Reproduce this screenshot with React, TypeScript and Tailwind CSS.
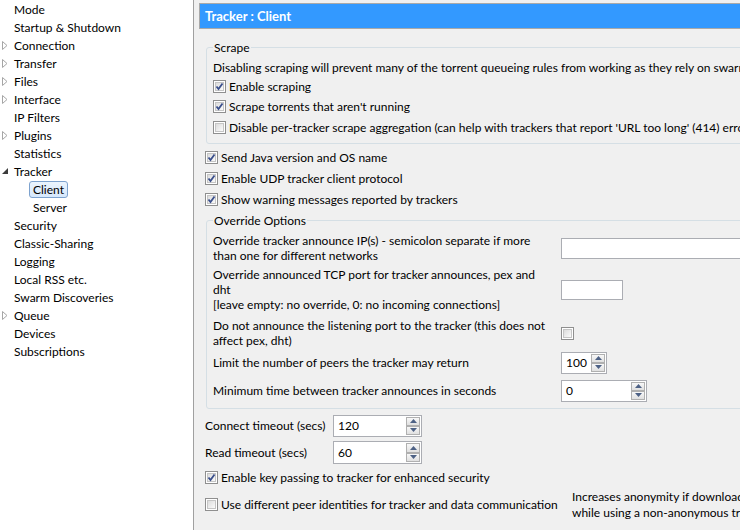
import React from "react";

const FONT = { fontFamily: "Lato, 'Open Sans', sans-serif" };

function Check({ checked }: { checked: boolean }) {
  return (
    <span className="relative inline-flex h-[13px] w-[13px] shrink-0 items-center justify-center border border-[#8f8f8f] bg-white">
      <span className="absolute inset-[1px] border border-[#c5c5c5] bg-gradient-to-br from-[#dcdcdc] to-[#fbfbfb]" />
      {checked && (
        <svg width="9" height="9" viewBox="0 0 9 9" className="relative">
          <path d="M1.5 4.5 L3.5 7 L7.5 1.5" fill="none" stroke="#3a4f8c" strokeWidth="1.8" />
        </svg>
      )}
    </span>
  );
}

function CheckRow({ checked, label, h = "h-[21px]" }: { checked: boolean; label: string; h?: string }) {
  return (
    <div className={`flex items-center gap-[3px] ${h}`}>
      <Check checked={checked} />
      <span className="whitespace-nowrap">{label}</span>
    </div>
  );
}

function Arrow({ up }: { up: boolean }) {
  return (
    <svg width="7" height="4" viewBox="0 0 7 4">
      {up ? <path d="M0 4 L3.5 0 L7 4 Z" fill="#4d6185" /> : <path d="M0 0 L3.5 4 L7 0 Z" fill="#4d6185" />}
    </svg>
  );
}

function Spinner({ value, w, h = "h-[22px]" }: { value: string; w: string; h?: string }) {
  return (
    <div className={`flex ${w} ${h} shrink-0 border border-[#abadb3] bg-white`}>
      <div className="flex flex-1 items-center pl-[4px]">{value}</div>
      <div className="flex w-[15px] flex-col gap-0 py-[1px] pr-[1px]">
        <div className="flex flex-1 items-center justify-center border border-[#b0b0b0] bg-gradient-to-b from-[#f8f8f8] to-[#e0e0e0]">
          <Arrow up />
        </div>
        <div className="flex flex-1 items-center justify-center border border-[#b0b0b0] bg-gradient-to-b from-[#f8f8f8] to-[#e0e0e0]">
          <Arrow up={false} />
        </div>
      </div>
    </div>
  );
}

type TreeItem = { label: string; level: number; exp?: "closed" | "open"; selected?: boolean };

const tree: TreeItem[] = [
  { label: "Mode", level: 0 },
  { label: "Startup & Shutdown", level: 0 },
  { label: "Connection", level: 0, exp: "closed" },
  { label: "Transfer", level: 0, exp: "closed" },
  { label: "Files", level: 0, exp: "closed" },
  { label: "Interface", level: 0, exp: "closed" },
  { label: "IP Filters", level: 0 },
  { label: "Plugins", level: 0, exp: "closed" },
  { label: "Statistics", level: 0 },
  { label: "Tracker", level: 0, exp: "open" },
  { label: "Client", level: 1, selected: true },
  { label: "Server", level: 1 },
  { label: "Security", level: 0 },
  { label: "Classic-Sharing", level: 0 },
  { label: "Logging", level: 0 },
  { label: "Local RSS etc.", level: 0 },
  { label: "Swarm Discoveries", level: 0 },
  { label: "Queue", level: 0, exp: "closed" },
  { label: "Devices", level: 0 },
  { label: "Subscriptions", level: 0 },
];

function Tree() {
  return (
    <div className="flex w-[194px] shrink-0 flex-col border-r border-[#a0a0a0] bg-white">
      {tree.map((t) => (
        <div key={t.label} className="relative flex h-[18px] items-center">
          {t.exp === "closed" && (
            <svg className="absolute left-[2px] top-[5px]" width="6" height="9" viewBox="0 0 6 9">
              <path d="M0.5 0.5 L5 4.5 L0.5 8.5 Z" fill="white" stroke="#a6a6a6" />
            </svg>
          )}
          {t.exp === "open" && (
            <svg className="absolute left-[2px] top-[6px]" width="7" height="7" viewBox="0 0 7 7">
              <path d="M6 0 L6 6 L0 6 Z" fill="#3c3c3c" />
            </svg>
          )}
          {t.selected ? (
            <div className="ml-[29px] flex h-[17px] items-center rounded-[3px] border border-[#7da2ce] bg-gradient-to-b from-[#ebf4fd] to-[#d6e8fc] px-[3px]">
              {t.label}
            </div>
          ) : (
            <span className={t.level === 1 ? "ml-[33px] whitespace-nowrap" : "ml-[14px] whitespace-nowrap"}>{t.label}</span>
          )}
        </div>
      ))}
    </div>
  );
}

export default function App() {
  return (
    <div className="flex h-[530px] w-[740px] overflow-hidden bg-[#f0f0f0] text-[12px] leading-[15px] text-black" style={FONT}>
      <Tree />
      <div className="relative min-w-0 flex-1 overflow-hidden">
        <div className="ml-[5px] mt-[3px] h-[26px] w-[700px] border border-[#a9a9a9] bg-[#3399ff] pl-[5px] text-[13px] font-bold leading-[24px] text-white">
          Tracker : Client
        </div>

        <fieldset className="ml-[12px] mt-[11px] w-[600px] rounded-[3px] border border-[#d5dfe5] pb-[5px] pl-[6px]">
          <legend className="px-[1px] leading-[15px]">Scrape</legend>
          <div className="mt-[5px] h-[15px] whitespace-nowrap">
            Disabling scraping will prevent many of the torrent queueing rules from working as they rely on swarm information
          </div>
          <div className="mt-[1px]">
            <CheckRow checked label="Enable scraping" h="h-[20px]" />
            <CheckRow checked label="Scrape torrents that aren't running" h="h-[21px]" />
            <CheckRow
              checked={false}
              label="Disable per-tracker scrape aggregation (can help with trackers that report 'URL too long' (414) errors)"
              h="h-[21px]"
            />
          </div>
        </fieldset>

        <div className="ml-[11px] mt-[3px]">
          <CheckRow checked label="Send Java version and OS name" />
          <CheckRow checked label="Enable UDP tracker client protocol" />
          <CheckRow checked label="Show warning messages reported by trackers" />
        </div>

        <fieldset className="ml-[12px] mt-[3px] w-[600px] rounded-[3px] border border-[#d5dfe5] pb-[6px] pl-[6px]">
          <legend className="px-[1px] leading-[15px]">Override Options</legend>
          <div className="mt-[5px] flex h-[30px] items-center">
            <div className="w-[348px] shrink-0 whitespace-nowrap">
              Override tracker announce IP(s) - semicolon separate if more
              <br />
              than one for different networks
            </div>
            <div className="h-[21px] w-[200px] shrink-0 border border-[#abadb3] bg-white" />
          </div>
          <div className="mt-[4px] flex h-[45px] items-center">
            <div className="w-[348px] shrink-0 whitespace-nowrap">
              Override announced TCP port for tracker announces, pex and
              <br />
              dht
              <br />
              [leave empty: no override, 0: no incoming connections]
            </div>
            <div className="h-[20px] w-[62px] shrink-0 border border-[#abadb3] bg-white" />
          </div>
          <div className="mt-[6px] flex h-[30px] items-center">
            <div className="w-[348px] shrink-0 whitespace-nowrap">
              Do not announce the listening port to the tracker (this does not
              <br />
              affect pex, dht)
            </div>
            <Check checked={false} />
          </div>
          <div className="mt-[3px] flex h-[23px] items-center">
            <div className="w-[348px] shrink-0 whitespace-nowrap">Limit the number of peers the tracker may return</div>
            <Spinner value="100" w="w-[46px]" />
          </div>
          <div className="mt-[5px] flex h-[23px] items-center">
            <div className="w-[348px] shrink-0 whitespace-nowrap">Minimum time between tracker announces in seconds</div>
            <Spinner value="0" w="w-[86px]" />
          </div>
        </fieldset>

        <div className="ml-[11px] mt-[5px]">
          <div className="flex h-[23px] items-center">
            <div className="w-[128px] shrink-0 whitespace-nowrap">Connect timeout (secs)</div>
            <Spinner value="120" w="w-[89px]" />
          </div>
          <div className="mt-[4px] flex h-[23px] items-center">
            <div className="w-[128px] shrink-0 whitespace-nowrap">Read timeout (secs)</div>
            <Spinner value="60" w="w-[89px]" h="h-[23px]" />
          </div>
          <div className="mt-[2px]">
            <CheckRow checked label="Enable key passing to tracker for enhanced security" h="h-[22px]" />
          </div>
          <div className="flex h-[33px] items-center">
            <div className="flex w-[367px] shrink-0 items-center gap-[3px]">
              <Check checked={false} />
              <span className="whitespace-nowrap">Use different peer identities for tracker and data communication</span>
            </div>
            <div className="whitespace-nowrap leading-[16px]">
              Increases anonymity if downloading torrents from an anonymous tracker
              <br />
              while using a non-anonymous tracker for data
            </div>
          </div>
        </div>
      </div>
    </div>
  );
}
